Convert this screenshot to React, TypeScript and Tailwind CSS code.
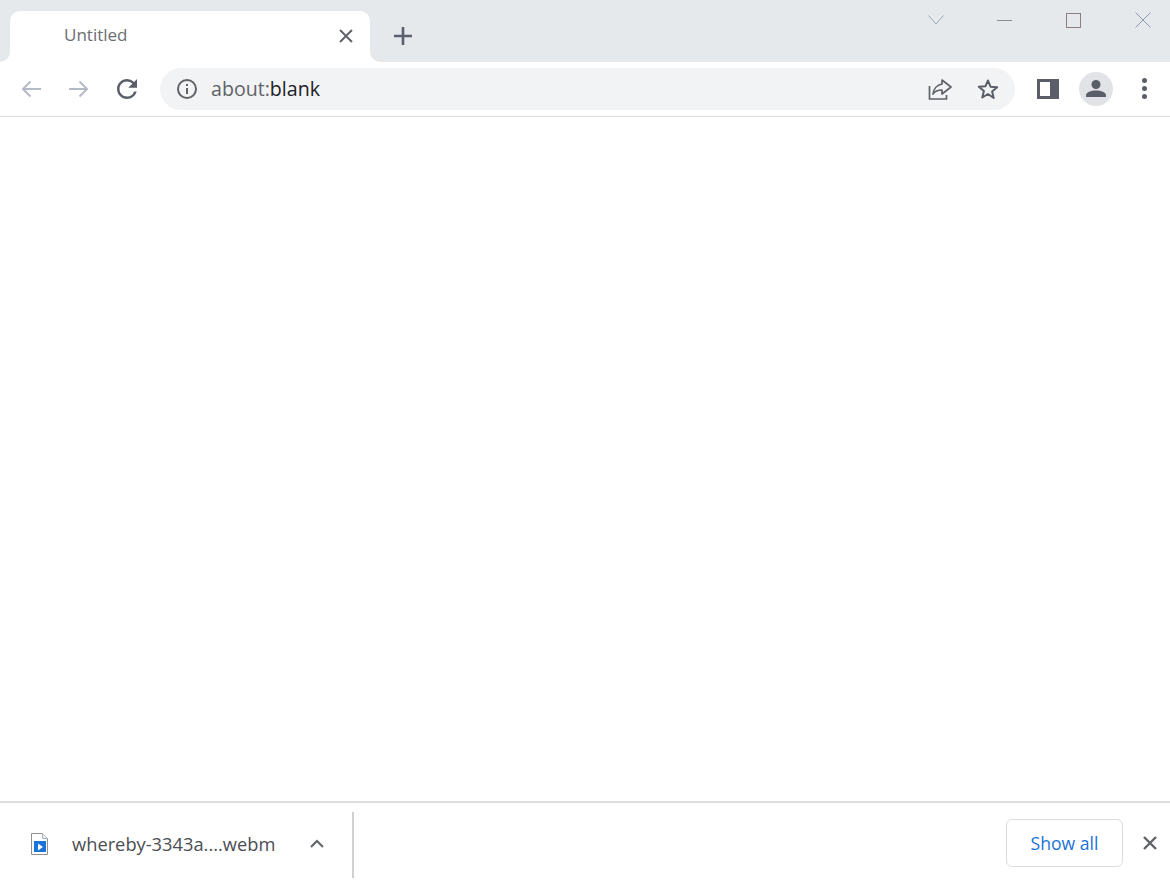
import React from 'react';

const IconBox = ({ children, className = '' }: { children: React.ReactNode; className?: string }) => (
  <div className={`flex items-center justify-center shrink-0 ${className}`}>{children}</div>
);

const TabStrip = () => (
  <div className="flex h-[62px] shrink-0 bg-[#e6e9ec]">
    <div className="self-end w-[10px] h-[10px] bg-white shrink-0">
      <div className="w-full h-full bg-[#e6e9ec] rounded-br-[10px]" />
    </div>
    <div className="mt-[11px] w-[360px] h-[51px] bg-white rounded-t-[10px] flex items-center shrink-0">
      <span className="ml-[54px] text-[17px] text-[#6a6e72] flex-1 mb-[4px]">Untitled</span>
      <svg width="14" height="14" viewBox="0 0 14 14" className="mr-[17px] mb-[2px]">
        <path d="M1 1l12 12M13 1L1 13" stroke="#5f6368" strokeWidth="2" fill="none" />
      </svg>
    </div>
    <div className="self-end w-[10px] h-[10px] bg-white shrink-0">
      <div className="w-full h-full bg-[#e6e9ec] rounded-bl-[10px]" />
    </div>
    <IconBox className="ml-[13px] mt-[26px] w-[20px] h-[20px]">
      <svg width="18" height="18" viewBox="0 0 18 18">
        <path d="M9 0v18M0 9h18" stroke="#5a6070" strokeWidth="2.6" fill="none" />
      </svg>
    </IconBox>
    <div className="flex-1" />
    <div className="flex h-[40px] mr-[-7px]">
      <IconBox className="w-[69px]">
        <svg width="16" height="10" viewBox="0 0 16 10">
          <path d="M.5.5L8 9 15.500.5" stroke="#9aa6bb" strokeWidth="1" fill="none" />
        </svg>
      </IconBox>
      <IconBox className="w-[69px]">
        <div className="w-[15px] h-px bg-[#8f8a8e]" />
      </IconBox>
      <IconBox className="w-[69px]">
        <div className="w-[15px] h-[15px] border border-[#8c7f80]" />
      </IconBox>
      <IconBox className="w-[69px]">
        <svg width="16" height="16" viewBox="0 0 16 16">
          <path d="M.5.5l15 15M15.500.5l-15 15" stroke="#8d9ab3" strokeWidth="1" fill="none" />
        </svg>
      </IconBox>
    </div>
  </div>
);

const Toolbar = () => (
  <div className="flex items-center h-[55px] shrink-0 bg-white border-b border-[#dadce0] pb-[1px]">
    <IconBox className="w-[48px] ml-[7px]">
      <svg width="20" height="18" viewBox="0 0 20 18">
        <path d="M20 9H2M9.500 1.500L2 9l7.500 7.500" stroke="#b4bac6" strokeWidth="2" fill="none" />
      </svg>
    </IconBox>
    <IconBox className="w-[48px]">
      <svg width="20" height="18" viewBox="0 0 20 18">
        <path d="M0 9h18M10.500 1.500L18 9l-7.500 7.500" stroke="#b4bac6" strokeWidth="2" fill="none" />
      </svg>
    </IconBox>
    <IconBox className="w-[48px]">
      <svg width="30" height="30" viewBox="0 0 24 24">
        <path
          d="M17.650 6.350A7.958 7.958 0 0 0 12 4c-4.420 0-7.990 3.580-7.990 8s3.570 8 7.990 8c3.730 0 6.840-2.550 7.730-6h-2.080A5.990 5.990 0 0 1 12 18c-3.310 0-6-2.690-6-6s2.690-6 6-6c1.660 0 3.140.69 4.220 1.780L13 11h7V4l-2.350 2.350z"
          fill="#5a5e68"
        />
      </svg>
    </IconBox>
    <div className="ml-[9px] w-[855px] h-[42px] rounded-full bg-[#f1f3f4] flex items-center shrink-0">
      <IconBox className="ml-[16px] w-[22px]">
        <svg width="22" height="22" viewBox="0 0 22 22">
          <circle cx="11" cy="11" r="9" stroke="#5f6368" strokeWidth="2" fill="none" />
          <path d="M11 10v6M11 6v2" stroke="#5f6368" strokeWidth="2" fill="none" />
        </svg>
      </IconBox>
      <span className="ml-[13px] flex-1 text-[19.6px] text-[#5f6368] mt-[1px]">
        about:<span className="text-[#202124]">blank</span>
      </span>
      <IconBox className="w-[48px]">
        <svg width="24" height="22" viewBox="0 0 24 22">
          <path d="M1.500 8v13h17v-4" stroke="#5f6368" strokeWidth="1.700" fill="none" />
          <path
            d="M14 2l9 7-9 7v-4c-4 0-7 1-9 4 .5-5 4-9 9-10z"
            stroke="#5f6368"
            strokeWidth="1.700"
            strokeLinejoin="round"
            fill="none"
          />
        </svg>
      </IconBox>
      <IconBox className="w-[48px] mr-[3px]">
        <svg width="24" height="24" viewBox="0 0 24 24">
          <path
            d="M12 3.500l2.500 6.200 6.700.5-5.100 4.300 1.600 6.500L12 17l-5.700 3.500 1.600-6.500-5.100-4.300 6.700-.5z"
            stroke="#5a5e68"
            strokeWidth="2"
            strokeLinejoin="round"
            fill="none"
          />
        </svg>
      </IconBox>
    </div>
    <IconBox className="ml-[9px] w-[48px]">
      <div className="w-[22px] h-[20px] bg-[#5a5e68] pl-[3px] py-[3px] pr-[9px]">
        <div className="w-full h-full bg-white" />
      </div>
    </IconBox>
    <IconBox className="w-[48px]">
      <div className="w-[34px] h-[34px] rounded-full bg-[#e1e3e6] flex items-center justify-center">
        <svg width="22" height="22" viewBox="0 0 22 22">
          <circle cx="11" cy="6.500" r="4.500" fill="#5a5e68" />
          <path d="M1 19v-1.500C1 14 6 12.500 11 12.500s10 1.500 10 5V19z" fill="#5a5e68" />
        </svg>
      </div>
    </IconBox>
    <IconBox className="w-[48px]">
      <div className="flex flex-col gap-[3px]">
        <div className="w-[5px] h-[5px] rounded-full bg-[#5a5e68]" />
        <div className="w-[5px] h-[5px] rounded-full bg-[#5a5e68]" />
        <div className="w-[5px] h-[5px] rounded-full bg-[#5a5e68]" />
      </div>
    </IconBox>
  </div>
);

const DownloadBar = () => (
  <div className="flex items-center h-[80px] shrink-0 bg-white border-t-2 border-[#dedede]">
    <IconBox className="ml-[31px] w-[17px] mt-[4px]">
      <svg width="17" height="22" viewBox="0 0 17 22">
        <path d="M.5.500h11l5 5v16H.500z" fill="#fff" stroke="#8f8f96" />
        <path d="M11.500.500v5h5" fill="#e6eef8" stroke="#a9b4c4" />
        <rect x="3" y="8" width="12" height="11" fill="#1a73d8" />
        <path d="M7 10.500l5 3.500-5 3.500z" fill="#fff" />
      </svg>
    </IconBox>
    <span className="ml-[24px] w-[237px] text-[18.3px] text-[#4a4e53] whitespace-nowrap mt-[4px]">
      whereby-3343a....webm
    </span>
    <IconBox className="w-[16px] mt-[3px]">
      <svg width="14" height="9" viewBox="0 0 14 9">
        <path d="M1 8l6-6 6 6" stroke="#5f6368" strokeWidth="2" fill="none" />
      </svg>
    </IconBox>
    <div className="ml-[27px] w-[2px] h-[66px] bg-[#d0d0d0] mt-[6px]" />
    <div className="flex-1" />
    <button className="w-[117px] h-[48px] border border-[#dcdcdc] rounded-[6px] bg-white text-[17.6px] text-[#1a73d8] mt-[2px]">
      Show all
    </button>
    <IconBox className="ml-[19px] mr-[12px] w-[16px] mt-[2px]">
      <svg width="14" height="14" viewBox="0 0 14 14">
        <path d="M1 1l12 12M13 1L1 13" stroke="#5f6368" strokeWidth="2.400" fill="none" />
      </svg>
    </IconBox>
  </div>
);

const App: React.FC = () => {
  return (
    <div className="flex flex-col h-[881px] w-[1170px] overflow-hidden bg-white font-['Open_Sans','Noto_Sans',sans-serif]">
      <TabStrip />
      <Toolbar />
      <div className="flex-1 bg-white" />
      <DownloadBar />
    </div>
  );
};

export default App;
